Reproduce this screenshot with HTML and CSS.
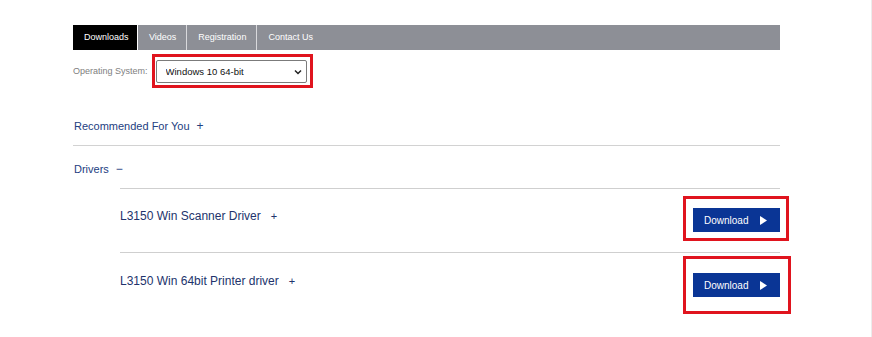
FILE: index.html
```html
<!DOCTYPE html>
<html lang="en">
<head>
<meta charset="utf-8">
<title>Downloads</title>
<link rel="stylesheet" href="styles.css">
</head>
<body>
<div class="page">
  <nav class="tabs">
    <a class="tab tab-active">Downloads</a>
    <a class="tab">Videos</a>
    <a class="tab">Registration</a>
    <a class="tab tab-last">Contact Us</a>
  </nav>

  <div class="os-row">
    <label class="os-label" for="os">Operating System:</label>
    <div class="mark mark-select">
      <div class="select-wrap">
        <select id="os" class="os-select">
          <option>Windows 10 64-bit</option>
        </select>
        <svg class="chev" width="8" height="6" viewBox="0 0 8 6"><path d="M1 1.5 L4 4.5 L7 1.5" fill="none" stroke="#222" stroke-width="1.5"/></svg>
      </div>
    </div>
  </div>

  <div class="acc-head acc-closed">
    <span>Recommended For You</span><span class="sign">+</span>
  </div>

  <div class="acc-head acc-open">
    <span>Drivers</span><span class="sign">&minus;</span>
  </div>

  <div class="items">
    <div class="item">
      <div class="item-title item-title-1">L3150 Win Scanner Driver<span class="sign small">+</span></div>
      <div class="mark mark-btn1">
        <a class="btn">Download<svg width="7" height="9" viewBox="0 0 7 9"><path d="M0 0 L7 4.5 L0 9 Z" fill="#fff"/></svg></a>
      </div>
    </div>
    <div class="item item-last">
      <div class="item-title item-title-2">L3150 Win 64bit Printer driver<span class="sign small">+</span></div>
      <div class="mark mark-btn2">
        <a class="btn">Download<svg width="7" height="9" viewBox="0 0 7 9"><path d="M0 0 L7 4.5 L0 9 Z" fill="#fff"/></svg></a>
      </div>
    </div>
  </div>
</div>
</body>
</html>
```
FILE: styles.css
```css
html, body {
  margin: 0;
  padding: 0;
  background: #fff;
}
body {
  font-family: "Liberation Sans", Arial, sans-serif;
  height: 337px;
  border-right: 1px solid #ececec;
  box-sizing: border-box;
}
.page {
  width: 707px;
  padding: 25px 0 0 73px;
}
.tabs {
  display: flex;
  height: 25px;
  background: #8d8f96;
}
.tab {
  display: block;
  padding: 0 10px 0 11px;
  line-height: 25px;
  font-size: 9px;
  color: #fff;
  border-right: 1px solid #d9d9dc;
}
.tab-last {
  border-right: none;
}
.tab-active {
  background: #000;
  border-right-color: #fff;
  width: 43px;
}
.os-row {
  display: flex;
  align-items: center;
  margin-top: 4px;
}
.os-label {
  font-size: 9px;
  color: #808080;
  margin-right: 4px;
}
.mark {
  border: 3px solid #e0141e;
}
.mark-select {
  padding: 3px 3px 2px 1px;
}
.select-wrap {
  position: relative;
  width: 151px;
  height: 23px;
}
.os-select {
  appearance: none;
  -webkit-appearance: none;
  width: 151px;
  height: 23px;
  border: 1px solid #7b7b7b;
  border-radius: 2px;
  background: #fff;
  font-family: "Liberation Sans", Arial, sans-serif;
  font-size: 9.5px;
  color: #111;
  padding: 0 0 0 9px;
  margin: 0;
}
.chev {
  position: absolute;
  right: 5px;
  top: 9px;
  pointer-events: none;
}
.acc-head {
  display: flex;
  align-items: center;
  font-size: 11px;
  color: #23407f;
  height: 42px;
  padding-top: 4px;
  box-sizing: border-box;
}
.acc-closed {
  margin-top: 15px;
  border-bottom: 1px solid #d2d2d2;
  height: 43px;
  padding-bottom: 1px;
}
.acc-head span:first-child {
  padding-left: 1px;
}
.sign {
  margin-left: 7px;
  font-size: 12px;
}
.small {
  margin-left: 10px;
  font-size: 11px;
}
.items {
  margin-left: 47px;
}
.item {
  display: flex;
  justify-content: space-between;
  align-items: flex-start;
  border-top: 1px solid #cfcfcf;
  height: 63px;
}
.item-last {
  height: 64px;
}
.item-title {
  font-size: 12px;
  color: #22336c;
}
.item-title-1 {
  margin-top: 20px;
}
.item-title-2 {
  margin-top: 21px;
}
.mark-btn1 {
  margin-top: 7px;
  margin-right: -9px;
  padding: 9px 6px 6px 7px;
}
.mark-btn2 {
  margin-top: 3px;
  margin-right: -11px;
  padding: 14px 8px 14px 7px;
}
.btn {
  display: flex;
  align-items: center;
  width: 87px;
  height: 24px;
  box-sizing: border-box;
  padding-left: 11px;
  background: #0a3595;
  color: #fff;
  font-size: 10px;
}
.btn svg {
  margin-left: 12px;
}
```
